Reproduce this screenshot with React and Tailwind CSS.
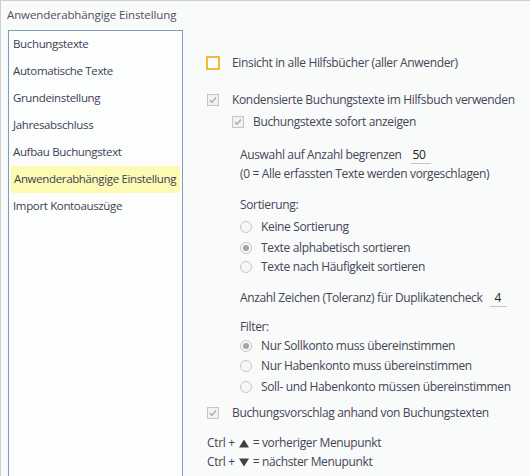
import React from "react";

const items = [
  "Buchungstexte",
  "Automatische Texte",
  "Grundeinstellung",
  "Jahresabschluss",
  "Aufbau Buchungstext",
  "Anwenderabhängige Einstellung",
  "Import Kontoauszüge",
];

const Check = () => (
  <span className="w-[12px] h-[12px] border border-[#c6c6c6] bg-[#f2f2f2] flex items-center justify-center shrink-0">
    <svg width="8" height="8" viewBox="0 0 8 8">
      <path d="M1 4.2 L3 6.2 L7 1.5" fill="none" stroke="#a9a9a9" strokeWidth="1.3" />
    </svg>
  </span>
);

const Radio = ({ on }) => (
  <span className="w-[12px] h-[12px] rounded-full border border-[#c8c8c8] bg-[#f7f7f7] flex items-center justify-center shrink-0">
    {on && <span className="w-[6px] h-[6px] rounded-full bg-[#a3a3a3]" />}
  </span>
);

const Tri = ({ down }) => (
  <svg width="10" height="9" viewBox="0 0 10 9" className="mx-[4px]">
    <path d={down ? "M0 0.5 L10 0.5 L5 8.5 Z" : "M0 8.5 L10 8.5 L5 0.5 Z"} fill="#3f3f48" />
  </svg>
);

const Row = ({ className = "", children }) => (
  <div className={`h-[18px] flex items-center whitespace-nowrap ${className}`}>{children}</div>
);

export default function App() {
  return (
    <div
      className="h-screen overflow-hidden bg-[#f9fafa] border-l border-t border-[#cfcfcf] text-[12px] text-[#454556]"
      style={{ fontFamily: "'Open Sans', 'Noto Sans', sans-serif" }}
    >
      <div className="h-[29px] pl-[6px] pt-[5px] text-[11.5px] tracking-[-0.1px] text-[#505060] leading-[18px]">
        Anwenderabhängige Einstellung
      </div>

      <div className="flex">
        {/* left list */}
        <div className="ml-[7px] w-[175px] h-[460px] border border-[#7f9dbb] bg-[#fcfefe] px-[1px] shrink-0">
          {items.map((t, i) => (
            <div
              key={i}
              className={`h-[27px] flex items-center pb-[2px] pl-[3px] whitespace-nowrap text-[11.5px] tracking-[-0.35px] text-[#3c4052] ${
                i === 5 ? "bg-[#fdfab3] rounded-[2px] mx-[1px] pl-[2px]" : ""
              }`}
            >
              {t}
            </div>
          ))}
        </div>

        {/* right settings */}
        <div className="pl-[24px] pt-[24px] tracking-[-0.35px]">
          <Row>
            <span className="w-[14px] h-[14px] border-2 border-[#f5b73d] bg-white shrink-0 -ml-[1px]" />
            <span className="ml-[12px]">Einsicht in alle Hilfsbücher (aller Anwender)</span>
          </Row>

          <Row className="mt-[19px]">
            <Check />
            <span className="ml-[13px]">Kondensierte Buchungstexte im Hilfsbuch verwenden</span>
          </Row>
          <Row className="mt-[4px] pl-[25px]">
            <Check />
            <span className="ml-[9px]">Buchungstexte sofort anzeigen</span>
          </Row>

          <div className="pl-[33px]">
            <Row className="mt-[15px]">
              <span>Auswahl auf Anzahl begrenzen</span>
              <span className="ml-[9px] w-[20px] border-b border-[#c4c4c4] pl-[2px] text-[#222] leading-[16px]">50</span>
            </Row>
            <Row className="mt-[1px]">(0 = Alle erfassten Texte werden vorgeschlagen)</Row>

            <Row className="mt-[13px]">Sortierung:</Row>
            <Row className="mt-[4px]">
              <Radio />
              <span className="ml-[9px]">Keine Sortierung</span>
            </Row>
            <Row className="mt-[3px]">
              <Radio on />
              <span className="ml-[9px]">Texte alphabetisch sortieren</span>
            </Row>
            <Row className="mt-[1px]">
              <Radio />
              <span className="ml-[9px]">Texte nach Häufigkeit sortieren</span>
            </Row>

            <Row className="mt-[13px]">
              <span>Anzahl Zeichen (Toleranz) für Duplikatencheck</span>
              <span className="ml-[8px] w-[17px] border-b border-[#c4c4c4] pl-[4px] text-[#222] leading-[16px]">4</span>
            </Row>

            <Row className="mt-[11px]">Filter:</Row>
            <Row className="mt-[1px]">
              <Radio on />
              <span className="ml-[9px]">Nur Sollkonto muss übereinstimmen</span>
            </Row>
            <Row className="mt-[2px]">
              <Radio />
              <span className="ml-[9px]">Nur Habenkonto muss übereinstimmen</span>
            </Row>
            <Row className="mt-[3px]">
              <Radio />
              <span className="ml-[9px]">Soll- und Habenkonto müssen übereinstimmen</span>
            </Row>
          </div>

          <Row className="mt-[8px]">
            <Check />
            <span className="ml-[13px]">Buchungsvorschlag anhand von Buchungstexten</span>
          </Row>

          <Row className="mt-[12px]">
            Ctrl +<Tri />= vorheriger Menupunkt
          </Row>
          <Row className="mt-[1px]">
            Ctrl +<Tri down />= nächster Menupunkt
          </Row>
        </div>
      </div>
    </div>
  );
}
